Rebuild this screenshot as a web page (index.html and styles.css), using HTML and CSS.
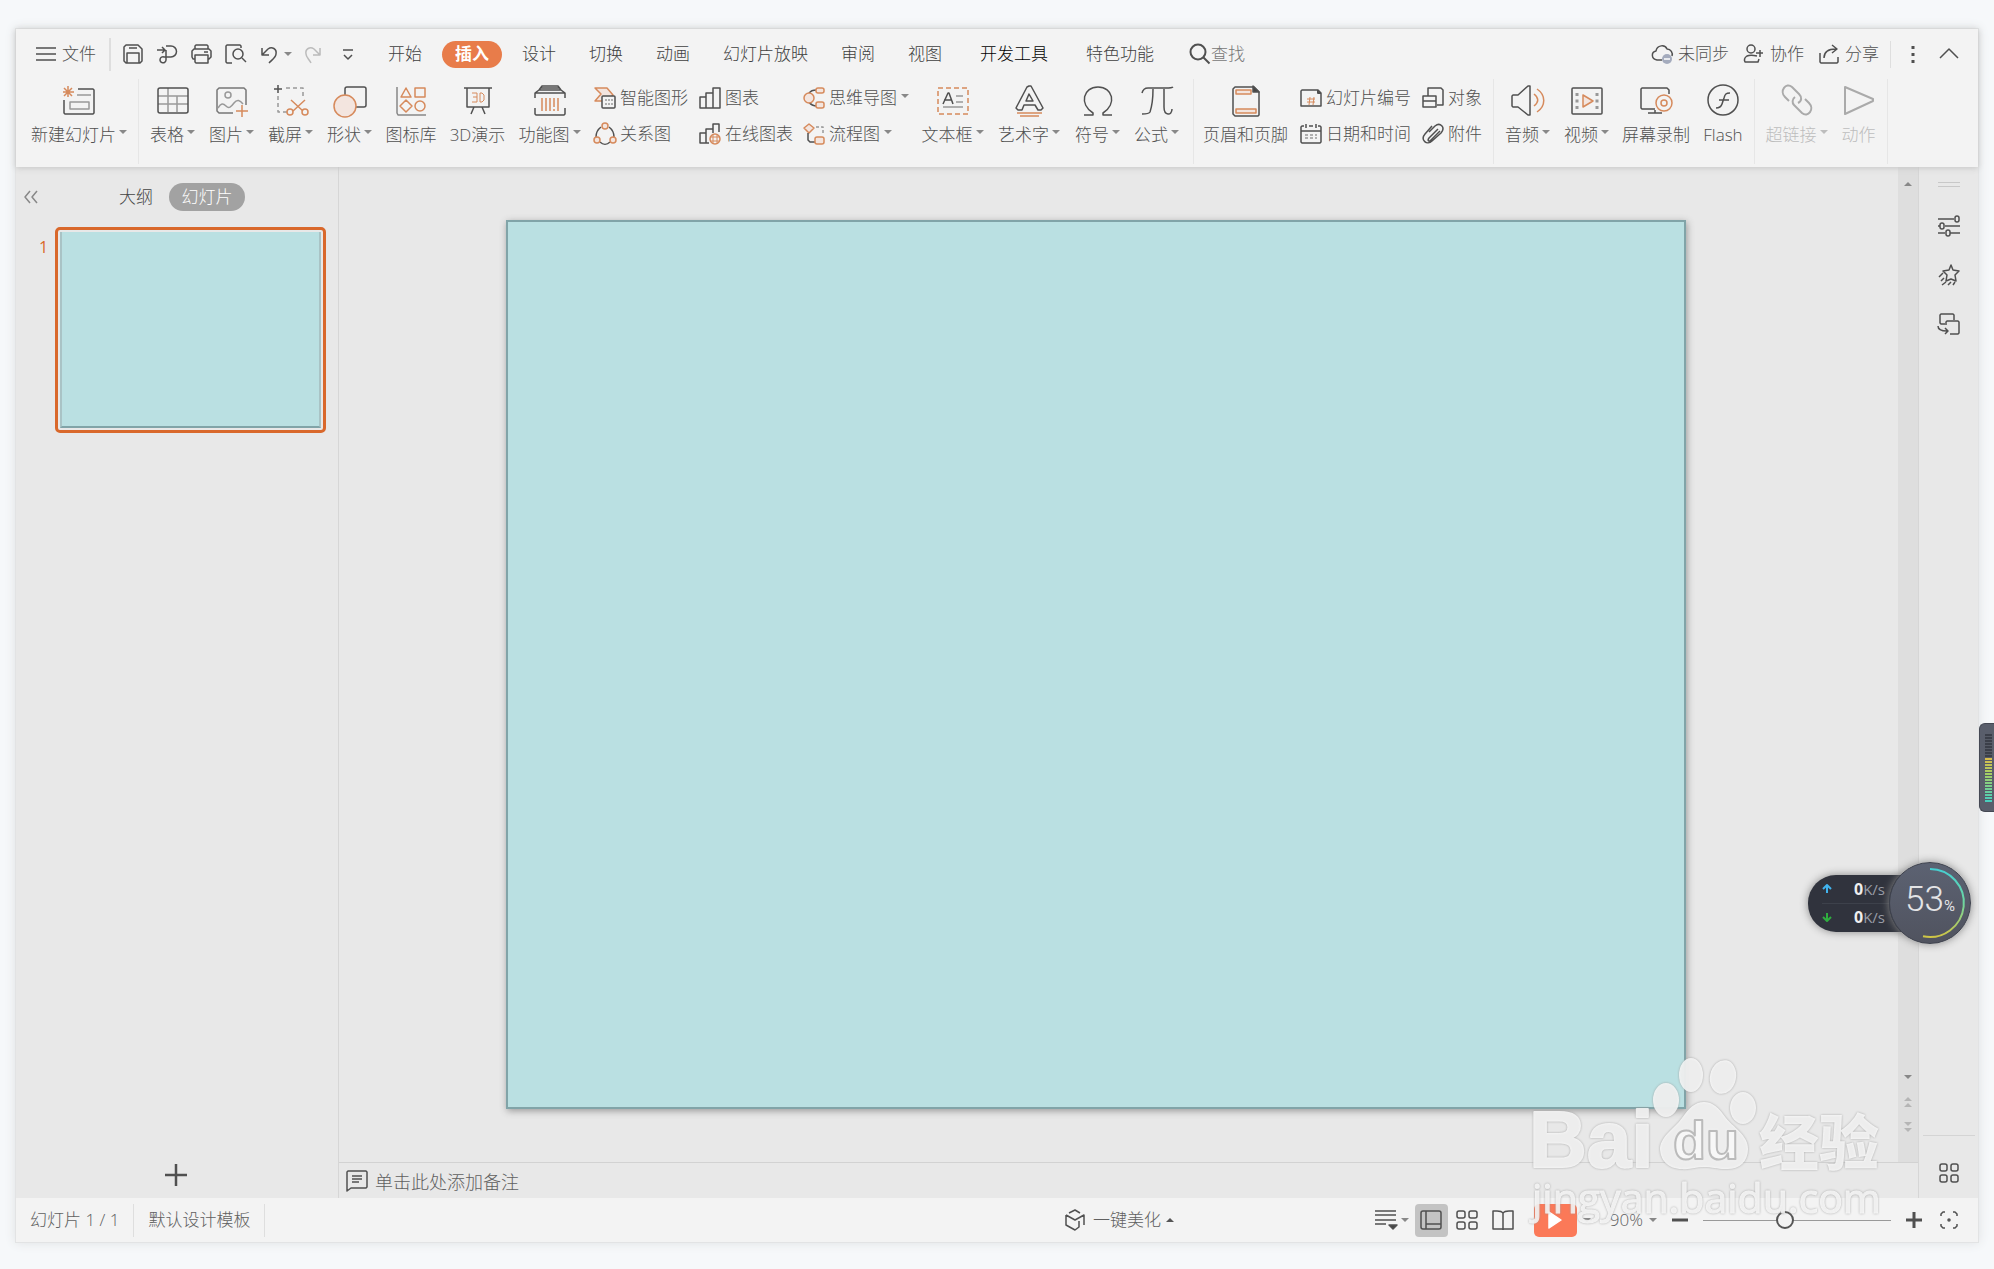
FILE: index.html
```html
<!DOCTYPE html>
<html lang="zh-CN">
<head>
<meta charset="utf-8">
<title>演示文稿</title>
<link rel="stylesheet" href="styles.css">
</head>
<body>
<div class="app">
  <header class="head">
    <div class="menubar">
      <button class="item menu"><svg class="i22" viewBox="0 0 22 22"><path d="M1 5h20M1 11h20M1 17h20"/></svg>文件</button>
      <span class="vline thick"></span>
      <div class="quick">
        <button aria-label="保存"><svg class="i22" viewBox="0 0 22 22"><path d="M4 2h12l4 4v12l-2 2H4l-2-2V4zM5 20V10h12v10M7 5h8"/></svg></button>
        <button aria-label="导出"><svg class="i22" viewBox="0 0 22 22"><path d="M1 7h8M6 4l3 3-3 3M10 3h5a5 5 0 0 1 0 11H8a3 3 0 1 0 2 3V7"/></svg></button>
        <button aria-label="打印"><svg class="i22" viewBox="0 0 22 22"><path d="M5 6V3l1-1h11l1 1v3M5 16H3l-1-2V8l2-2h15l2 2v6l-2 2h-1M5 12h13v8H6l-1-1zM14 9h4"/></svg></button>
        <button aria-label="打印预览"><svg class="i22" viewBox="0 0 22 22"><path d="M8 20H3l-1-1V3l1-1h13l1 1v2"/><circle cx="14" cy="11" r="5"/><path d="M18 15l4 4"/></svg></button>
        <button aria-label="撤销"><svg class="i22" viewBox="0 0 22 22"><path d="M4 5v7h7M4 12l6-6c4-3 9 0 8 5 0 3-3 5-7 9"/></svg></button>
      </div>
      <span class="caret undo"></span>
      <button class="redo" aria-label="恢复"><svg class="i22" viewBox="0 0 22 22"><path d="M18 5v7h-7M18 12l-6-6C8 3 3 6 4 11c0 3 3 5 5 9"/></svg></button>
      <button class="more" aria-label="更多"><svg class="i22" viewBox="0 0 22 22"><path d="M6 7h10M7 12l4 4 4-4"/></svg></button>
      <nav class="tabs">
        <button>开始</button><button class="on">插入</button><button>设计</button><button>切换</button><button>动画</button><button>幻灯片放映</button><button>审阅</button><button>视图</button><button class="wide dark">开发工具</button><button class="wide">特色功能</button>
      </nav>
      <label class="search"><svg class="i22" viewBox="0 0 22 22"><circle cx="9" cy="9" r="7.500"/><path d="M14.500 14.500l6 6"/></svg><input type="text" placeholder="查找" aria-label="查找"></label>
      <div class="account">
        <button class="item"><svg class="i22" viewBox="0 0 22 22"><path d="M11 17H6C0 16 0 9 5 8c1-6 9-7 11-2 4 0 6 4 5 7"/><circle cx="16" cy="16" r="5" fill="#a4abbd" stroke="none"/><path d="M13 16h6" stroke="#fff"/></svg>未同步</button>
        <button class="item"><svg class="i22" viewBox="0 0 22 22"><circle cx="8" cy="6" r="4"/><path d="M14 13c-4-1-8-1-10 0-3 2-3 4-2 6h13l1-3M13 10h7M17 7v7"/></svg>协作</button>
        <button class="item"><svg class="i22" viewBox="0 0 22 22"><path d="M2 10v9l1 1h16l1-1v-5M6 15c0-6 4-9 12-9M14 2l5 4-5 4"/></svg>分享</button>
      </div>
      <span class="vline account-end"></span>
      <button class="dots" aria-label="选项"><svg viewBox="0 0 6 22"><path d="M3 3v3M3 10v3M3 17v3" stroke-width="3"/></svg></button>
      <button class="fold" aria-label="折叠功能区"><svg class="i22" viewBox="0 0 22 22"><path d="M2 15l9-9 9 9"/></svg></button>
    </div>

    <div class="ribbon">
      <button class="big w118"><svg viewBox="0 0 32 32"><path d="M15 5h15l1 1v23l-1 1H2l-1-1V16"/><path class="g" d="M14 11h14M7 18h19v7H7z"/><path class="o" d="M5 2v11M0 8h11M1 4l8 8M9 4l-8 8" stroke-width="1.500"/></svg><span>新建幻灯片<i class="caret"></i></span></button>
      <span class="vline first"></span>
      <button class="big w59"><svg viewBox="0 0 32 32"><path class="g" d="M1 12h30M1 20h30M11 4v24M20 12v16"/><rect x="1" y="4" width="30" height="25" rx="2"/></svg><span>表格<i class="caret"></i></span></button>
      <button class="big w59"><svg viewBox="0 0 32 32"><path d="M17 29H3l-2-2V6l2-2h25l2 2v15" stroke="#777"/><circle class="g" cx="12" cy="11" r="3"/><path class="g" d="M2 24c3-5 5-5 8-2s5 1 8-3 6-3 9 1"/><path class="o" d="M26 21v12M20 27h12"/></svg><span>图片<i class="caret"></i></span></button>
      <button class="big w59"><svg viewBox="0 0 32 32"><path d="M3 1v8M-1 5h8"/><path class="g" d="M11 4h17v11M3 12v16h9" stroke-dasharray="4 3"/><path class="o" d="M16 16l12 11M30 16L18 27"/><circle class="o" cx="15" cy="28" r="3"/><circle class="o" cx="30" cy="28" r="3"/></svg><span>截屏<i class="caret"></i></span></button>
      <button class="big w59"><svg viewBox="0 0 32 32"><rect x="11" y="3" width="21" height="20" rx="2"/><circle class="of" cx="11" cy="22" r="11"/></svg><span>形状<i class="caret"></i></span></button>
      <button class="big w64"><svg viewBox="0 0 32 32"><path d="M2 3v26l1 2h28" stroke="#888"/><path class="o" d="M11 4l5 9H6zM20 4h10v9H20zM11 16l6 6-6 6-6-6z"/><circle class="o" cx="25" cy="22" r="5"/></svg><span>图标库</span></button>
      <button class="big w69"><svg viewBox="0 0 32 32"><path d="M2 4h28M5 4v19h22V4M12 23l-3 7M20 23l3 7"/><path class="o" d="M10 9h5v9h-5M11 13h4M18 9h2l2 2v5l-2 2h-2z" stroke-width="1"/></svg><span>3D演示</span></button>
      <button class="big w75"><svg viewBox="0 0 32 32"><path d="M1 14V9l4-3h22l4 3v5M5 6l3-4h16l3 4M7 4h18M1 9h30M1 24v6l1 1h28l1-1v-6"/><path class="o" d="M8 14v13M12 14v13M16 14v13M20 14v9M20 25v2M24 14v13"/></svg><span>功能图<i class="caret"></i></span></button>
      <div class="stack w105">
        <button><svg class="i22" viewBox="0 0 22 22"><path class="of" d="M1 1h12l6 7-6 6H1l6-7z"/><rect x="8" y="9" width="13" height="12" rx="1" fill="#f3f3f3"/><path class="g" d="M11 13h8M11 17h8" stroke-dasharray="2 1"/></svg>智能图形</button>
        <button><svg class="i22" viewBox="0 0 22 22"><path d="M7 4C3 7 2 10 2 14M15 4c4 3 5 6 5 10M6 19c3 3 7 3 10 0"/><circle class="of" cx="11" cy="3" r="3"/><circle class="of" cx="3" cy="17" r="3"/><circle class="of" cx="19" cy="17" r="3"/></svg>关系图</button>
      </div>
      <div class="stack w104">
        <button><svg class="i22" viewBox="0 0 22 22"><path d="M1 10h6v11H1zM7 6h7v15H7zM14 1h7v20h-7z"/></svg>图表</button>
        <button><svg class="i22" viewBox="0 0 22 22"><path d="M10 20H1V10h6M7 20V6h7v4M14 10V1h6v8"/><circle class="o" cx="16" cy="16" r="5"/><path class="o" d="M11 14h10M11 18h10M14 11v10M18 11v10" stroke-width="1"/></svg>在线图表</button>
      </div>
      <div class="stack w119">
        <button><svg class="i22" viewBox="0 0 22 22"><path d="M6 6c2-2 3-3 8-3M6 15c2 3 4 4 8 4"/><circle class="of" cx="6" cy="11" r="5"/><rect class="of" x="13" y="1" width="8" height="5" rx="2"/><rect class="of" x="13" y="15" width="8" height="6" rx="2"/></svg>思维导图<i class="caret"></i></button>
        <button><svg class="i22" viewBox="0 0 22 22"><path class="of" d="M6 1l5 4-5 5-5-5z"/><path d="M5 10v7l2 2h5"/><path class="g" d="M13 4h7v8" stroke-dasharray="3 2"/><rect class="of" x="12" y="14" width="9" height="7" rx="2"/></svg>流程图<i class="caret"></i></button>
      </div>
      <button class="big w75"><svg viewBox="0 0 32 32"><rect class="o" x="1" y="4" width="30" height="26" stroke-dasharray="5 3"/><path d="M6 20l5-11h1l4 11M7 16h8"/><path class="g" d="M19 12h7M19 18h7M6 23h20"/></svg><span>文本框<i class="caret"></i></span></button>
      <button class="big w78"><svg viewBox="0 0 32 32"><path d="M16 2h2l12 22-2 2h-3l-3-5H11l-2 5H5l-2-2L14 3zM16 10l-3 7h7z"/><path class="o" d="M4 29h25M7 32h19"/></svg><span>艺术字<i class="caret"></i></span></button>
      <button class="big w59"><svg viewBox="0 0 32 32"><path d="M2 31h9v-2C-3 20 1 3 16 3s19 17 5 26v2h9"/></svg><span>符号<i class="caret"></i></span></button>
      <button class="big w59"><svg viewBox="0 0 32 32"><path d="M1 9c1-4 3-5 6-5h18c4 0 6 0 7-1M12 5c0 9-1 17-3 23-1 2-4 2-8 2M23 5v18c0 9 8 9 8 2"/></svg><span>公式<i class="caret"></i></span></button>
      <span class="vline far"></span>
      <button class="big w95"><svg viewBox="0 0 32 32"><path d="M5 3h19l5 5v23l-1 1H5l-2-2V5z"/><path d="M23 2v6h6z" fill="#444"/><path class="of" d="M6 6h15v4H6zM6 25h20v4H6z"/></svg><span>页眉和页脚</span></button>
      <div class="stack w122">
        <button><svg class="i22" viewBox="0 0 22 22"><path d="M2 3h16l3 3v13H1V4z"/><path d="M18 3v3h3" stroke-width="2"/><path class="o" d="M10 10l-1 8M14 10l-1 8M7 12h8M7 15h8" stroke-width="1"/></svg>幻灯片编号</button>
        <button><svg class="i22" viewBox="0 0 22 22"><path d="M4 3H2L1 4v15l1 1h18l1-1V4l-1-1h-2M9 3h4M1 8h20M6 1v4M16 1v4"/><path class="g" d="M5 12h12M5 15h12" stroke-dasharray="3 2"/></svg>日期和时间</button>
      </div>
      <div class="stack w74">
        <button><svg class="i22" viewBox="0 0 22 22"><path d="M6 9V1h13l2 2v15h-6"/><path d="M1 9h13v11H1zM1 14h13"/></svg>对象</button>
        <button><svg class="i22" viewBox="0 0 22 22"><path d="M16 6l-9 9c-2 3 0 4 2 2l9-9M10 3l-7 8c-5 6 2 12 7 7l9-8c5-6-1-11-6-7l-6 6"/></svg>附件</button>
      </div>
      <span class="vline"></span>
      <button class="big w59"><svg viewBox="0 0 32 32"><path d="M0 12l1-1h5L16 2h2v29h-2L6 23H1l-1-1z"/><path class="o" d="M22 10c5 4 5 8 0 12M25 5c9 6 9 17 0 23"/></svg><span>音频<i class="caret"></i></span></button>
      <button class="big w59"><svg viewBox="0 0 32 32"><rect x="1" y="4" width="30" height="26" rx="1"/><path class="g" d="M6 9v16M26 9v16" stroke-width="3" stroke-dasharray="3 3.500"/><path class="of" d="M12 11v12l10-6z"/></svg><span>视频<i class="caret"></i></span></button>
      <button class="big w80"><svg viewBox="0 0 32 32"><path d="M15 25H2l-1-1V5l1-1h25l2 2v4M15 26v3M8 29h14"/><circle class="o" cx="24" cy="19" r="8"/><circle class="o" cx="24" cy="19" r="3"/></svg><span>屏幕录制</span></button>
      <button class="big w54"><svg viewBox="0 0 32 32"><circle cx="16" cy="16" r="15"/><path d="M23 9c-4 0-5 1-6 5l-2 6c-1 3-3 4-6 4M12 16h10"/></svg><span>Flash</span></button>
      <span class="vline"></span>
      <button class="big w75 off" disabled><svg viewBox="0 0 32 32"><path d="M8 17l-4-4C-2 7 5-2 11 3l7 7c3 3 3 7-1 9M24 15l4 4c6 6-1 15-7 10l-8-8c-2-2-2-6 1-8"/></svg><span>超链接<i class="caret"></i></span></button>
      <button class="big w49 off" disabled><svg viewBox="0 0 32 32"><path d="M2 3l28 12v2L2 30z"/></svg><span>动作</span></button>
      <span class="vline"></span>
    </div>
  </header>

  <div class="work">
    <aside class="outline">
      <div class="outline-head">
        <button class="hide" aria-label="收起"><svg viewBox="0 0 14 12"><path d="M6 0L1 6l5 6M13 0L8 6l5 6"/></svg></button>
        <button class="plain">大纲</button>
        <button class="chip">幻灯片</button>
      </div>
      <div class="thumb"><span>1</span><div class="frame"><div class="mini"></div></div></div>
      <button class="add" aria-label="新建幻灯片"><svg class="i22" viewBox="0 0 22 22"><path d="M11 0v22M0 11h22" stroke-width="2.500"/></svg></button>
    </aside>
    <main class="center">
      <div class="view">
        <div class="canvas"><div class="slide"></div></div>
        <div class="scroll">
          <button aria-label="向上"><svg viewBox="0 0 10 14"><path d="M1 9l4-4 4 4z" fill="#888" stroke="none"/></svg></button>
          <span class="grow"></span>
          <button aria-label="向下"><svg viewBox="0 0 10 14"><path d="M1 5l4 4 4-4z" fill="#888" stroke="none"/></svg></button>
          <button aria-label="上一张"><svg viewBox="0 0 10 14"><path d="M1 6l4-4 4 4zM1 12l4-4 4 4z" fill="#b5b5b5" stroke="none"/></svg></button>
          <button aria-label="下一张"><svg viewBox="0 0 10 14"><path d="M1 2l4 4 4-4zM1 8l4 4 4-4z" fill="#b5b5b5" stroke="none"/></svg></button>
        </div>
      </div>
      <label class="notes"><svg class="i22" viewBox="0 0 22 22"><path d="M2 1h18l1 1v15l-1 1H5l-4 3V2z"/><path d="M6 6h10M6 9h10M6 12h7"/></svg><input type="text" placeholder="单击此处添加备注" aria-label="备注"></label>
    </main>
    <aside class="tools">
      <span class="grip"></span>
      <button aria-label="属性"><svg class="i22" viewBox="0 0 22 22"><path d="M0 4h16M0 11h2M7 11h15M0 18h7M12 18h10"/><rect x="17" y="1" width="4" height="6" rx="2"/><rect x="2" y="8" width="4" height="6" rx="2"/><rect x="8" y="15" width="4" height="6" rx="2"/></svg></button>
      <button aria-label="动画"><svg class="i22" viewBox="0 0 22 22"><path d="M13 1l2 5 6 1-4 4 1 6-5-2-5 2 1-6-4-4 6-1zM5 9l-4 4M6 14l-3 3M8 18l-4 3M13 18l-3 3M17 18l-2 3"/></svg></button>
      <button aria-label="切换"><svg class="i22" viewBox="0 0 22 22"><path d="M7 11H3l-1-1V2l1-1h12l1 1v5M8 12V9l1-1h11l1 1v11l-1 1h-8M0 13c0 4 3 5 9 5M7 15l3 3-3 3"/></svg></button>
      <span class="grow"></span>
      <hr>
      <button class="last" aria-label="全部工具"><svg class="i22" viewBox="0 0 22 22"><rect x="2" y="2" width="7" height="7" rx="2"/><rect x="13" y="2" width="7" height="7" rx="2"/><rect x="2" y="13" width="7" height="7" rx="2"/><rect x="13" y="13" width="7" height="7" rx="2"/></svg></button>
    </aside>
  </div>

  <footer class="status">
    <div class="left"><span>幻灯片 1 / 1</span><span class="vline"></span><span>默认设计模板</span><span class="vline"></span></div>
    <button class="item beautify"><svg class="i22" viewBox="0 0 22 22"><path d="M5 4l6-3 5 3M2 6v10l9 5 4-3v-6M2 6l9 5 9-5v10"/></svg>一键美化<i class="caret up"></i></button>
    <div class="right">
      <button class="sp4" aria-label="备注"><svg class="i22" viewBox="0 0 22 22"><path d="M0 2h21M0 6h21M0 11h21M0 15h11"/><path d="M14 16h8l-4 4z" fill="#444"/></svg></button><i class="caret"></i>
      <button class="viewbtn on" aria-label="普通视图"><svg class="i22" viewBox="0 0 22 22"><rect x="1" y="2" width="20" height="18" rx="2"/><path d="M6 2v18M6 15h15"/></svg></button>
      <button class="viewbtn" aria-label="浏览视图"><svg class="i22" viewBox="0 0 22 22"><rect x="1" y="2" width="8" height="7" rx="2"/><rect x="13" y="2" width="8" height="7" rx="2"/><rect x="1" y="13" width="8" height="7" rx="2"/><rect x="13" y="13" width="8" height="7" rx="2"/></svg></button>
      <button class="viewbtn book" aria-label="阅读视图"><svg class="i22" viewBox="0 0 22 22"><path d="M11 4v17M11 4C9 1 6 2 1 2v18h10M11 4c2-3 5-2 10-2v18H11"/></svg></button>
      <button class="play" aria-label="放映"><svg viewBox="0 0 14 18"><path d="M1 1l12 8-12 8z" fill="#fff" stroke="#fff"/></svg></button><i class="caret"></i>
      <button class="zoom">90%<i class="caret"></i></button>
      <button class="minus" aria-label="缩小"><svg viewBox="0 0 18 18"><path d="M1 9h16" stroke-width="3"/></svg></button>
      <input class="range" type="range" min="0" max="100" value="43" aria-label="缩放">
      <button class="plus" aria-label="放大"><svg viewBox="0 0 18 18"><path d="M1 9h16M9 1v16" stroke-width="3"/></svg></button>
      <button class="fit" aria-label="适应窗口"><svg viewBox="0 0 18 18"><path d="M1 5V3l2-2h2M13 1h2l2 2v2M17 13v2l-2 2h-2M5 17H3l-2-2v-2"/><circle cx="9" cy="9" r="1"/></svg></button>
    </div>
  </footer>
</div>

<div class="meter"><span></span></div>
<div class="speed">
  <div class="rates">
    <p><svg viewBox="0 0 10 10"><path d="M5 9V2M1 5l4-4 4 4" stroke="#41b4ee"/></svg><b>0</b>K/s</p>
    <p><svg viewBox="0 0 10 10"><path d="M5 1v7M1 5l4 4 4-4" stroke="#2fae3f"/></svg><b>0</b>K/s</p>
  </div>
  <div class="ball">
    <svg viewBox="0 0 82 82"><defs><linearGradient id="arc" x1="0" y1="0" x2="0" y2="1"><stop offset="0" stop-color="#45cfd2"/><stop offset=".5" stop-color="#6fd6a0"/><stop offset="1" stop-color="#cfc545"/></linearGradient></defs><path d="M41 7a34 34 0 1 1-7 67.300" stroke="url(#arc)"/></svg>
    <p>53<small>%</small></p>
  </div>
</div>
<svg class="mark" viewBox="0 0 370 190" aria-hidden="true">
  <g class="solid">
    <ellipse cx="139" cy="60" rx="13" ry="17"/><ellipse cx="164" cy="35" rx="12" ry="17"/><ellipse cx="196" cy="37" rx="13" ry="17" transform="rotate(12 196 37)"/><ellipse cx="216" cy="68" rx="13" ry="16"/>
    <path d="M177 62c9 0 15 6 22 16 6 8 23 18 22 31 0 13-9 21-23 20-8 0-13-2-21-2s-14 3-22 2c-14 0-22-9-22-21 1-12 15-20 22-30s13-16 22-16z"/>
    <text class="bai" x="2" y="127">Bai</text>
    <text class="cn" x="232" y="125">经验</text>
    <text class="url" x="5" y="173">jingyan.baidu.com</text>
  </g>
  <text class="du" x="146" y="119">du</text>
</svg>
</body>
</html>
```
FILE: styles.css
```css
* { box-sizing: border-box; }
body {
  margin: 0;
  height: 100vh;
  padding: 28px 15px 26px;
  position: relative;
  overflow: hidden;
  background: #f6f8fa;
  color: #505050;
  font: 300 17px/24px "Open Sans", "Noto Sans CJK SC", sans-serif;
}
button, input { font: inherit; color: inherit; border: 0; padding: 0; margin: 0; background: none; white-space: nowrap; }
input { outline: 0; min-width: 0; }
input::placeholder { color: inherit; opacity: 1; }
button { display: flex; align-items: center; justify-content: center; flex: none; }
p { margin: 0; }
svg { display: block; flex: none; fill: none; stroke: #505050; stroke-width: 1.5; stroke-linejoin: round; overflow: visible; }
.i22 { width: 22px; height: 22px; }
.g { stroke: #999; }
.o, .of { stroke: #d68a5c; }
.of { fill: #f3e5df; }
.grow { flex: 1; }
.caret { flex: none; width: 0; border: 4px solid transparent; border-top-color: #888; border-bottom: 0; }
.caret.up { border-top: 0; border-bottom: 4px solid #555; }
.vline { flex: none; width: 1px; background: #dedede; }

.app { height: 100%; display: flex; flex-direction: column; border: 1px solid #e2e3e4; background: #e8e8e8; box-shadow: 0 0 10px #dfe1e3; }
.head { flex: none; background: #f3f3f3; box-shadow: 0 1px 6px #c4c4c4; position: relative; }
.menubar { display: flex; align-items: center; height: 50px; padding: 0 18px 0 19px; }
.item { gap: 5px; }
.menubar .vline { height: 27px; }
.menubar .vline.thick { width: 2px; height: 33px; margin: 0 11px 0 13px; }
.quick { display: flex; gap: 12px; }
.undo { margin: 0 10px 0 4px; }
.redo svg { stroke: #bbb; }
.more { margin: 0 16px 0 13px; }
.tabs { display: flex; gap: 7px; color: #404040; }
.tabs button { height: 27px; padding: 0 13px; border-radius: 14px; }
.tabs .wide { margin-left: 5px; }
.tabs .dark { color: #000; }
.tabs .on { background: #e87c4a; color: #fff; font-weight: 700; }
.search { display: flex; align-items: center; margin-left: 22px; flex: 0 1 160px; }
.search svg { stroke-width: 2; }
.search input { width: 80px; color: #777; }
.account { display: flex; gap: 14px; margin-left: auto; }
.menubar .account-end { margin: 0 19px 0 11px; }
.dots svg { width: 6px; height: 22px; }
.dots { margin-right: 22px; }

.ribbon { display: flex; height: 88px; padding-left: 4px; overflow: hidden; }
.ribbon .vline { height: 85px; margin: 0 4px; background: #e6e6e6; }
.ribbon .vline.first { margin: 0 4px 0 0; }
.ribbon .vline.far { margin-left: 7px; }
.big { flex-direction: column; justify-content: flex-start; padding-top: 5px; gap: 7px; height: 80px; }
.big svg { width: 32px; height: 32px; }
.big span { display: flex; align-items: center; gap: 3px; }
.big .caret { margin-bottom: 6px; }
.stack { flex: none; padding: 7px 0 0 7px; display: flex; flex-direction: column; gap: 12px; align-items: flex-start; }
.stack button { gap: 4px; height: 24px; }
.stack .caret { margin-bottom: 4px; }
.off { color: #bdbdbd; }
.off svg { stroke: #aaa; stroke-width: 2; }
.off .caret { border-top-color: #bdbdbd; }
.w49 { width: 49px; } .w54 { width: 54px; } .w59 { width: 59px; } .w64 { width: 64px; }
.w69 { width: 69px; } .w74 { width: 74px; } .w75 { width: 75px; } .w78 { width: 78px; }
.w80 { width: 80px; } .w95 { width: 95px; } .w104 { width: 104px; } .w105 { width: 105px; }
.w118 { width: 118px; } .w119 { width: 119px; } .w122 { width: 122px; }

.work { flex: 1; min-height: 0; display: grid; grid-template-columns: 323px 1fr 60px; }
.outline { display: flex; flex-direction: column; border-right: 1px solid #d6d6d6; }
.outline-head { display: flex; align-items: center; padding: 16px 0 0 8px; height: 44px; }
.hide svg { width: 14px; height: 12px; stroke: #888; }
.plain { margin: 0 16px 0 81px; color: #444; }
.chip { height: 28px; width: 76px; border-radius: 14px; background: #a2a2a2; color: #fff; }
.thumb { display: flex; margin: 16px 12px 0 23px; gap: 6px; flex: none; }
.thumb span { width: 10px; padding-top: 8px; color: #d9682b; font-weight: 400; font-size: 16px; }
.frame { flex: 1; border: 3px solid #d9682b; border-radius: 5px; padding: 2px; }
.mini { height: 196px; background: #bae0e2; border: 2px solid #a9c3c5; border-width: 0 2px 2px; border-bottom-color: #81a4a8; }
.add { margin: auto auto 12px 149px; }

.center { display: flex; flex-direction: column; min-width: 0; }
.view { flex: 1; display: flex; min-height: 0; }
.canvas { flex: 1; display: flex; padding: 53px 212px 53px 167px; }
.slide { flex: 1; background: #bae0e2; border: 2px solid #81a4a8; box-shadow: 1px 2px 7px #999; }
.scroll { width: 20px; background: #dedede; display: flex; flex-direction: column; align-items: center; padding: 10px 0 28px; gap: 11px; }
.scroll svg { width: 10px; height: 14px; }
.notes { height: 36px; border-top: 1px solid #d2d2d2; display: flex; align-items: center; gap: 7px; padding-left: 7px; font-size: 18px; color: #606060; }
.notes input { flex: 1; padding-top: 2px; }
.tools { border-left: 1px solid #d6d6d6; display: flex; flex-direction: column; align-items: center; padding-top: 15px; }
.grip { width: 22px; height: 5px; border: solid #c8c8c8; border-width: 1px 0; margin-bottom: 28px; }
.tools button { margin-bottom: 27px; }
.tools hr { width: 52px; border: 0; border-top: 1px solid #d4d4d4; margin: 0 0 26px; }
.tools .last { margin-bottom: 14px; }

.status { flex: none; height: 44px; background: #f3f3f3; display: grid; grid-template-columns: 1048px 1fr auto; align-items: center; color: #606060; }
.left { display: flex; align-items: center; gap: 14px; padding-left: 14px; }
.left .vline { height: 33px; }
.beautify { justify-self: start; }
.beautify svg { margin-right: 2px; }
.right { display: flex; align-items: center; padding-right: 20px; }
.sp4 { margin-right: 4px; }
.viewbtn { width: 33px; height: 33px; border-radius: 4px; margin-left: 3px; }
.viewbtn.on { background: #c3c3c3; margin-left: 6px; }
.play { width: 43px; height: 33px; border-radius: 5px; background: #fb7958; margin: 0 6px 0 14px; }
.play svg { width: 14px; height: 18px; }
.zoom { gap: 6px; margin: 0 14px 0 19px; }
.minus svg, .plus svg, .fit svg { width: 18px; height: 18px; }
.range { appearance: none; width: 188px; height: 18px; margin: 0 14px; background: linear-gradient(#999, #999) center / 100% 1px no-repeat; }
.range::-webkit-slider-thumb { appearance: none; width: 18px; height: 18px; border: 2px solid #555; border-radius: 50%; background: #f3f3f3; }
.fit { margin-left: 17px; }

.meter { position: absolute; right: 0; top: 723px; width: 15px; height: 89px; border: 1px solid #444853; border-right: 0; border-radius: 6px 0 0 6px; background: #595e6b; padding: 10px 2px 9px 5px; }
.meter span { display: block; height: 100%; background: repeating-linear-gradient(transparent 0 2px, #565b66 2px 3px), linear-gradient(#3b3f49 0 35%, #d9bd4b 36%, #a0ce67 60%, #46cfc0); }
.speed { position: absolute; right: 23px; top: 862px; display: flex; align-items: center; color: #999da6; }
.rates { width: 120px; height: 57px; margin-right: -39px; border-radius: 28px 0 0 28px; background: #30333d; box-shadow: 0 0 8px #888; padding-left: 14px; font-size: 15px; font-weight: 400; }
.rates p { display: flex; align-items: center; height: 28px; }
.rates p + p { border-top: 1px solid #3d414b; }
.rates svg { width: 10px; height: 10px; margin-right: 22px; stroke-width: 2; }
.rates b { font-size: 16px; color: #eee; }
.ball { position: relative; width: 82px; height: 82px; border-radius: 50%; background: linear-gradient(#5c6272, #50535f); border: 1px solid #3e424d; box-shadow: 0 0 8px #888; display: grid; place-items: center; }
.ball svg { position: absolute; inset: -1px; width: 82px; height: 82px; stroke-width: 2; }
.ball p { font: 300 35px/40px Roboto, sans-serif; color: #e4e4e6; }
.ball small { font-size: 15px; font-weight: 400; }

.mark { position: absolute; right: 97px; bottom: 39px; width: 370px; height: 190px; pointer-events: none; filter: drop-shadow(0 0 1px #999); }
.mark text { font-family: "Liberation Sans", sans-serif; }
.solid { fill: #fff; stroke: none; opacity: .8; }
.mark .bai { font-size: 80px; font-weight: 700; stroke: #fff; stroke-width: 2; }
.mark .cn { font: 900 60px "Noto Sans CJK SC", sans-serif; }
.mark .url { font: 400 41px "Open Sans", sans-serif; stroke: #fff; stroke-width: 1; }
.mark .du { font-size: 54px; font-weight: 700; fill: #f7f7f7; stroke: #bbb; stroke-width: 2; }
```
